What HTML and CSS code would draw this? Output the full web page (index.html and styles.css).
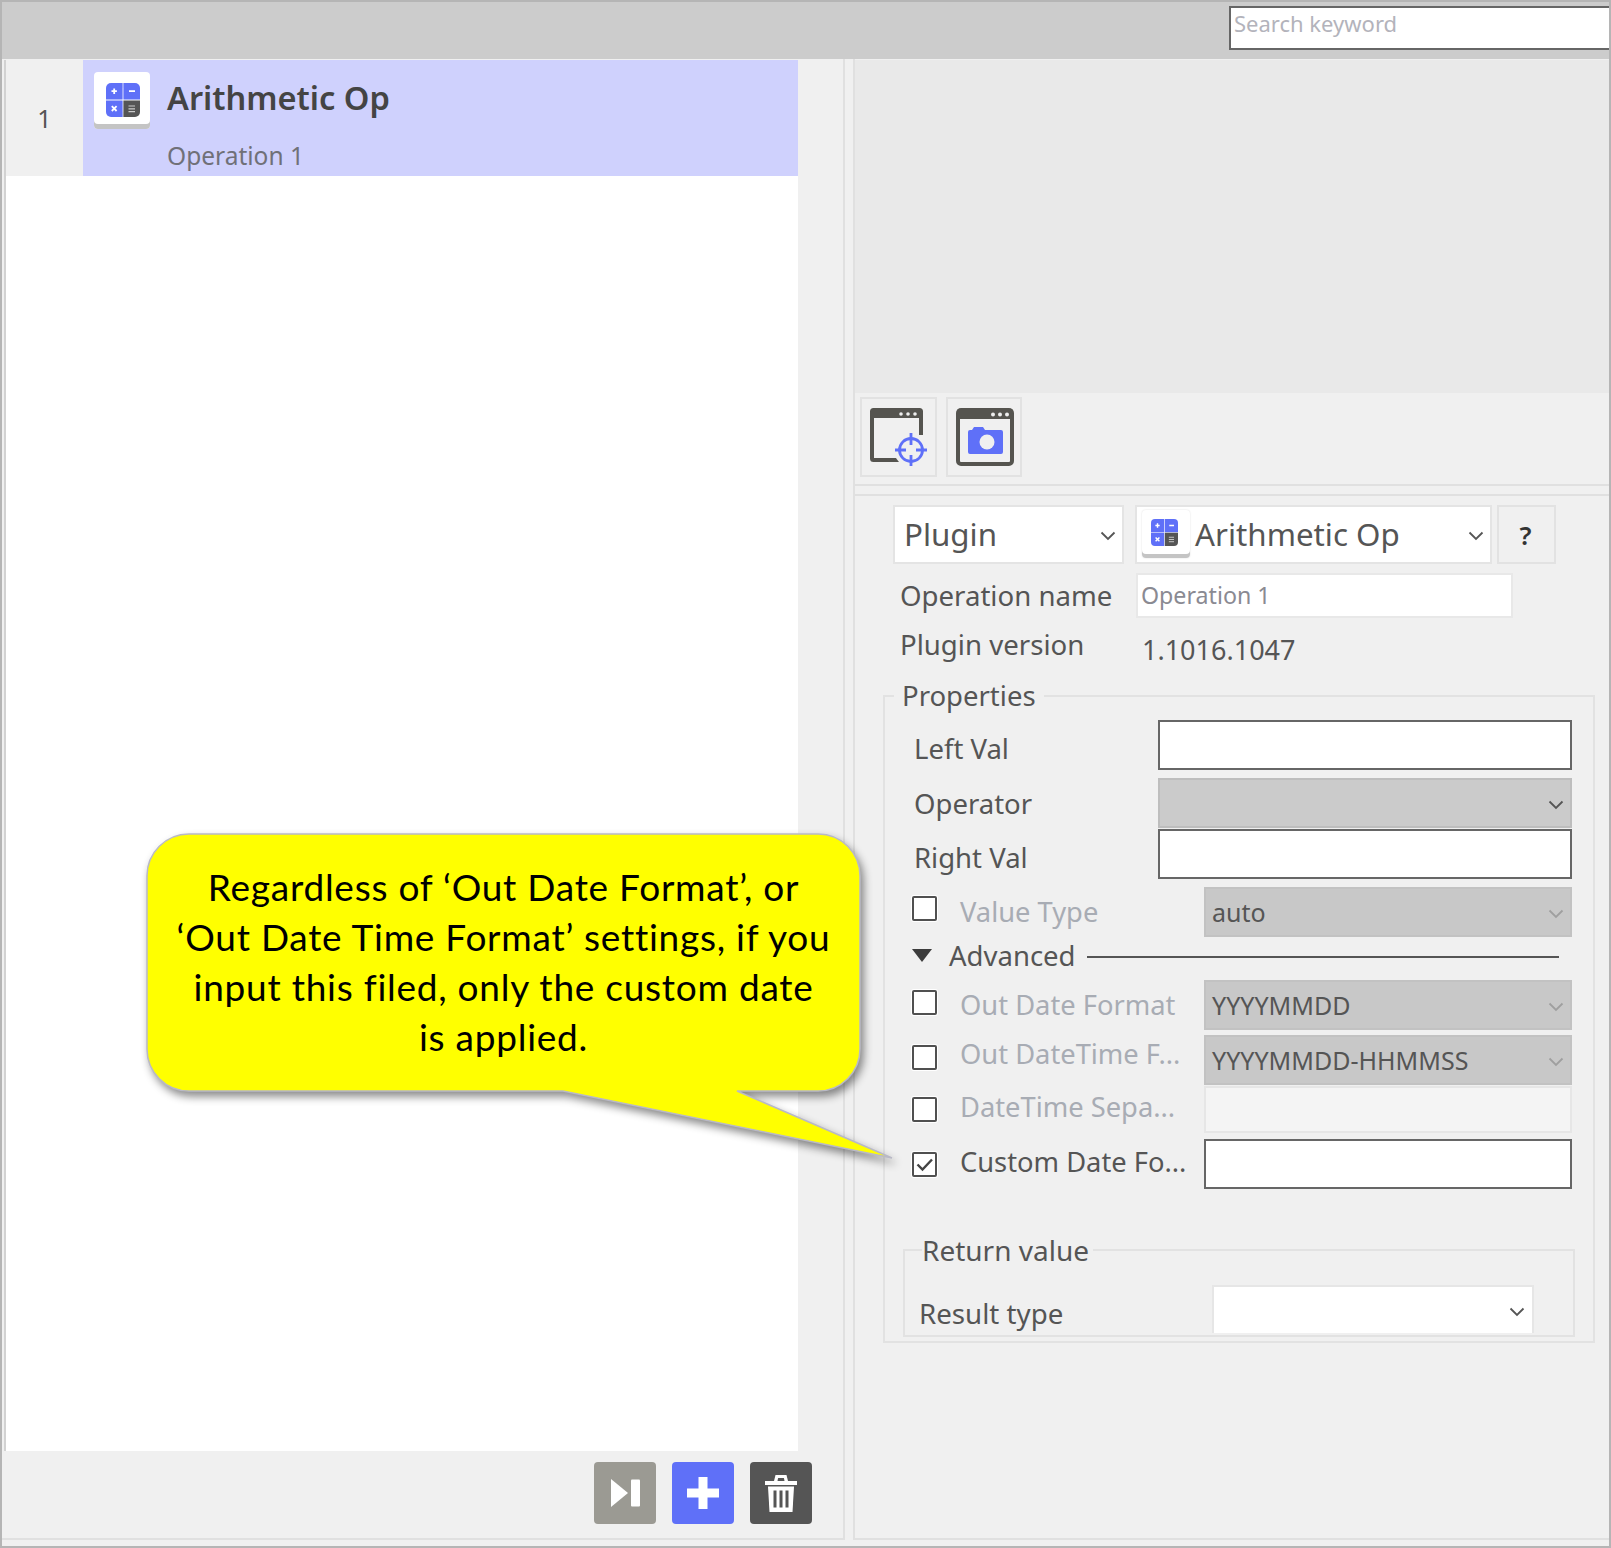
FILE: index.html
```html
<!DOCTYPE html>
<html lang="en">
<head>
<meta charset="utf-8">
<title>Arithmetic Op</title>
<link rel="stylesheet" href="styles.css">
</head>
<body>
<svg class="defs" width="0" height="0" aria-hidden="true">
  <symbol id="calc" viewBox="0 0 34 34">
    <path d="M5 0h11.600v16.600H0V5a5 5 0 0 1 5-5z" fill="#5f70f8"/>
    <path d="M17.400 0H29a5 5 0 0 1 5 5v11.600H17.400z" fill="#5f70f8"/>
    <path d="M0 17.400h16.600V34H5a5 5 0 0 1-5-5z" fill="#5f70f8"/>
    <path d="M17.400 17.400H34V29a5 5 0 0 1-5 5H17.400z" fill="#555"/>
    <path d="M5.500 8.200h5.400M8.200 5.500v5.400M23 8.200h6M5.800 23.200l4.800 4.800M10.600 23.200l-4.800 4.800" stroke="#fff" stroke-width="1.800" fill="none"/>
    <path d="M22.500 23h6.500M22.500 25.800h6.500M22.500 28.600h6.500" stroke="#ccc" stroke-width="1.200" fill="none"/>
  </symbol>
  <symbol id="chev" viewBox="0 0 16 10">
    <path d="M1.500 1.500 8 8l6.500-6.500" stroke="#555" stroke-width="1.800" fill="none"/>
  </symbol>
</svg>
<div class="app">
  <header class="topbar">
    <div class="search">Search keyword</div>
  </header>
  <main class="main">
    <section class="left">
      <div class="list">
        <div class="op-row">
          <div class="op-index">1</div>
          <div class="op-body">
            <div class="tile"><svg class="tile-icon"><use href="#calc"/></svg></div>
            <div class="op-text">
              <div class="op-title">Arithmetic Op</div>
              <div class="op-sub">Operation 1</div>
            </div>
          </div>
        </div>
      </div>
      <div class="actions">
        <div class="act act-grey">
          <svg viewBox="0 0 32 32" width="32" height="32"><path d="M2 2 19 16 2 30z" fill="#fff"/><rect x="22" y="2.500" width="9" height="27" rx="1" fill="#fff"/></svg>
        </div>
        <div class="act act-blue">
          <svg viewBox="0 0 32 32" width="32" height="32"><path d="M11.500 0h9v11.500H32v9H20.500V32h-9V20.500H0v-9h11.500z" fill="#fff"/></svg>
        </div>
        <div class="act act-dark">
          <svg viewBox="0 0 32 38" width="32" height="38"><path d="M9 7 10.500 1h11L23 7h9v4H0V7z" fill="#fff"/><path d="M12.500 7l.6-3h5.800l.6 3z" fill="#555"/><path d="M3 12.500h26l-1.500 25.500h-23z" fill="#fff"/><path d="M10 16.500v17M16 16.500v17M22 16.500v17" stroke="#555" stroke-width="3"/></svg>
        </div>
      </div>
    </section>
    <section class="right">
      <div class="preview"></div>
      <div class="tools">
        <div class="tool">
          <svg viewBox="0 0 58 58" width="58" height="58">
            <path d="M32 52H3.500A1.500 1.500 0 0 1 2 50.500V3.500A1.500 1.500 0 0 1 3.500 2h46A1.500 1.500 0 0 1 51 3.500V27" fill="none" stroke="#55544f" stroke-width="4"/>
            <rect x="1" y="1" width="51" height="9" rx="2" fill="#55544f"/>
            <circle cx="31" cy="6" r="1.800" fill="#eee"/><circle cx="38" cy="6" r="1.800" fill="#eee"/><circle cx="45" cy="6" r="1.800" fill="#eee"/>
            <circle cx="41" cy="42" r="17" fill="#f0f0f0"/>
            <circle cx="41" cy="42" r="11.500" fill="none" stroke="#5f70f8" stroke-width="2.800"/>
            <path d="M41 25v12M41 47v11M25 42h11M46 42h11" stroke="#5f70f8" stroke-width="2.800"/>
          </svg>
        </div>
        <div class="tool tool-cam">
          <svg viewBox="0 0 58 58" width="58" height="58">
            <rect x="2" y="2" width="54" height="54" rx="3" fill="#f0f0f0" stroke="#55544f" stroke-width="4"/>
            <rect x="1" y="1" width="56" height="10" rx="2" fill="#55544f"/>
            <circle cx="37" cy="6.500" r="2" fill="#eee"/><circle cx="44" cy="6.500" r="2" fill="#eee"/><circle cx="51" cy="6.500" r="2" fill="#eee"/>
            <path d="M14 22h2l2-3h9l2 3h16a2 2 0 0 1 2 2v20a2 2 0 0 1-2 2H14a2 2 0 0 1-2-2V24a2 2 0 0 1 2-2z" fill="#5f70f8"/>
            <circle cx="31" cy="34" r="7.500" fill="#f0f0f0"/>
          </svg>
        </div>
      </div>
      <div class="panel">
        <div class="selects">
          <div class="sel sel-plugin"><span>Plugin</span><svg class="chev"><use href="#chev"/></svg></div>
          <div class="sel sel-op">
            <div class="tile tile-sm"><svg class="tile-icon-sm"><use href="#calc"/></svg></div>
            <span>Arithmetic Op</span><svg class="chev"><use href="#chev"/></svg>
          </div>
          <div class="help">?</div>
        </div>
        <div class="meta meta-name">
          <div class="meta-label">Operation name</div>
          <div class="name-input">Operation 1</div>
        </div>
        <div class="meta meta-ver">
          <div class="meta-label">Plugin version</div>
          <div class="ver-value">1.1016.1047</div>
        </div>
        <fieldset class="props">
          <legend>Properties</legend>
          <div class="row row-a"><div class="lbl lbl-down">Left Val</div><div class="fld fld-wide fld-dark"></div></div>
          <div class="row row-b"><div class="lbl">Operator</div><div class="fld fld-wide fld-grey"><svg class="chev chev-end"><use href="#chev"/></svg></div></div>
          <div class="row row-c"><div class="lbl lbl-down">Right Val</div><div class="fld fld-wide fld-dark"></div></div>
          <div class="crow crow-a"><div class="cb cb-up"></div><div class="clbl off">Value Type</div><div class="fld fld-off">auto<svg class="chev chev-end chev-off"><use href="#chev"/></svg></div></div>
          <div class="adv"><span class="tri"></span><span class="adv-text">Advanced</span><span class="adv-line"></span></div>
          <div class="crow crow-b"><div class="cb cb-up"></div><div class="clbl off clbl-up1">Out Date Format</div><div class="fld fld-off">YYYYMMDD<svg class="chev chev-end chev-off"><use href="#chev"/></svg></div></div>
          <div class="crow crow-c"><div class="cb cb-up"></div><div class="clbl off clbl-up4">Out DateTime F...</div><div class="fld fld-off">YYYYMMDD-HHMMSS<svg class="chev chev-end chev-off"><use href="#chev"/></svg></div></div>
          <div class="crow crow-d"><div class="cb"></div><div class="clbl off clbl-up">DateTime Sepa...</div><div class="fld fld-blank"></div></div>
          <div class="crow crow-e">
            <div class="cb"><svg viewBox="0 0 21 21" width="21" height="21"><path d="M3.500 10.500 8.500 15.500 18 5.500" fill="none" stroke="#444" stroke-width="2.400"/></svg></div>
            <div class="clbl clbl-up">Custom Date Fo...</div><div class="fld fld-dark"></div>
          </div>
          <fieldset class="ret">
            <legend>Return value</legend>
            <div class="ret-row"><div class="ret-lbl">Result type</div><div class="ret-sel"><svg class="chev"><use href="#chev"/></svg></div></div>
          </fieldset>
        </fieldset>
      </div>
    </section>
  </main>
  <aside class="callout">
    <svg class="bubble" viewBox="0 0 713 257" width="713" height="257">
      <path d="M42 0H671A42 42 0 0 1 713 42V215A42 42 0 0 1 671 257H590L745 324 416 257H42A42 42 0 0 1 0 215V42A42 42 0 0 1 42 0Z" fill="#ffff00" stroke="#b9b9c6" stroke-width="1.500"/>
    </svg>
    <p class="callout-text">Regardless of ‘Out Date Format’, or<br>‘Out Date Time Format’ settings, if you<br>input this filed, only the custom date<br>is applied.</p>
  </aside>
</div>
</body>
</html>
```

FILE: styles.css
```css
* { box-sizing: border-box; }
html, body { margin: 0; padding: 0; }
body { width: 1611px; height: 1548px; overflow: hidden; font-family: "Noto Sans", "Open Sans", sans-serif; color: #555; }
.defs { position: absolute; }
.app { position: relative; width: 1611px; height: 1548px; border: 2px solid #b5b5b5; background: #f0f0f0; display: flex; flex-direction: column; }

.topbar { height: 57px; flex: none; background: #cccccc; display: flex; justify-content: flex-end; padding-top: 4px; }
.search { width: 380px; height: 44px; background: #fff; border: 2px solid #666; border-right: 0; padding-left: 3px; font-size: 22px; line-height: 31px; color: #b3b3bb; }

.main { display: flex; flex: 1; min-height: 0; }

.left { width: 843px; flex: none; display: flex; flex-direction: column; padding-top: 1px; padding-left: 2px; height: 1481px; border-right: 2px solid #e0e0e0; border-bottom: 2px solid #e0e0e0; }
.list { width: 794px; height: 1391px; background: #fff; border-left: 2px solid #d2d2d2; flex: none; }
.op-row { display: flex; height: 116px; }
.op-index { width: 77px; background: #f0f0f0; font-size: 25px; line-height: 116px; text-align: center; color: #555; }
.op-body { flex: 1; background: #cfd1fd; display: flex; padding: 12px 0 0 11px; gap: 17px; }
.tile { width: 56px; height: 57px; background: #fff; border-radius: 4px; box-shadow: inset 0 -5px 0 #c4c4c4; display: flex; align-items: flex-start; justify-content: center; padding: 11px 0 0 2px; flex: none; }
.tile-icon { width: 34px; height: 34px; }
.op-text { display: flex; flex-direction: column; }
.op-title { font-size: 32.600px; line-height: 44px; font-weight: 600; color: #444; margin-top: 4px; }
.op-sub { font-size: 24.500px; line-height: 34px; color: #707078; margin-top: 19px; }

.actions { flex: 1; display: flex; justify-content: flex-end; align-items: flex-start; gap: 16px; padding: 11px 31px 0 0; }
.act { width: 62px; height: 62px; border-radius: 4px; display: flex; align-items: center; justify-content: center; }
.act-grey { background: #9b9a93; }
.act-blue { background: #5f70f8; }
.act-dark { background: #555555; }

.right { width: 756px; margin-left: 8px; height: 1481px; border-left: 2px solid #e0e0e0; border-bottom: 2px solid #e0e0e0; padding-top: 1px; display: flex; flex-direction: column; }
.preview { height: 333px; background: #e9e9e9; flex: none; }
.tools { height: 93px; flex: none; border-bottom: 2px solid #e0e0e0; display: flex; gap: 9px; padding: 4px 0 0 5px; }
.tool { width: 77px; height: 80px; border: 2px solid #e2e2e2; display: flex; align-items: center; justify-content: center; }
.tool-cam { width: 76px; padding-left: 2px; }

.panel { flex: 1; margin-top: 8px; border-top: 2px solid #e0e0e0; padding-top: 9px; }
.selects { display: flex; padding-left: 38px; height: 59px; }
.sel { height: 59px; background: #fff; border: 2px solid #e4e4e4; display: flex; align-items: center; position: relative; font-size: 31.300px; color: #555; padding-bottom: 2px; }
.sel-plugin { width: 231px; padding-left: 9px; }
.sel-op { width: 357px; margin-left: 11px; padding-left: 5px; gap: 5px; color: #555; }
.chev { width: 16px; height: 10px; flex: none; }
.sel .chev { position: absolute; right: 6px; top: 24px; }
.tile-sm { width: 48px; height: 48px; padding: 9px 4px 0 0; box-shadow: inset 0 -4px 0 #c4c4c4, 0 0 2px #ddd; }
.tile-icon-sm { width: 27px; height: 27px; }
.help { width: 59px; height: 59px; margin-left: 5px; border: 2px solid #e2e2e2; text-align: center; font-size: 26px; line-height: 56px; color: #333; font-weight: 600; padding-right: 2px; }

.meta { display: flex; padding-left: 45px; }
.meta-label { width: 236px; font-size: 27.600px; line-height: 36px; color: #555; flex: none; padding-bottom: 2px; }
.meta-name { margin-top: 9px; height: 45px; align-items: center; }
.name-input { width: 377px; height: 45px; background: #fff; border: 2px solid #e8e8e8; font-size: 23.200px; line-height: 40px; padding-left: 3px; color: #8a8a92; }
.meta-ver { height: 50px; padding-top: 8px; }
.ver-value { font-size: 27px; line-height: 36px; margin-top: 6px; margin-left: 6px; color: #555; }

fieldset { margin: 0; min-width: 0; border: 2px solid #e2e2e2; }
legend { font-size: 27.500px; line-height: 30px; color: #555; }
.props { width: 712px; height: 662px; margin: 13px 0 0 28px; padding: 9px 0 0 0; }
.props > legend { margin-left: 9px; padding: 0 8px; }

.row { display: flex; align-items: center; height: 50px; padding-left: 29px; }
.row-b { margin-top: 8px; }
.row-c { margin-top: 1px; }
.lbl { width: 244px; font-size: 27.500px; color: #555; }
.lbl-down { padding-top: 6px; }
.fld { position: relative; height: 50px; width: 368px; font-size: 25px; line-height: 46px; padding-left: 6px; color: #555; }
.fld-wide { width: 414px; }
.fld-dark { background: #fff; border: 2px solid #666; }
.fld-grey { background: #cbcbcb; border: 2px solid #bdbdbd; }
.fld-off { background: #c8c8c8; border: 2px solid #c2c2c2; }
.fld-blank { height: 47px; background: #f4f4f4; border: 2px solid #e6e6e6; }
.chev-end { position: absolute; right: 6px; top: 20px; }
.chev-off { opacity: .35; }

.crow { display: flex; align-items: center; height: 50px; padding-left: 27px; }
.crow-a { height: 49px; margin-top: 8px; }
.crow-b { margin-top: 10px; }
.crow-c { margin-top: 5px; }
.crow-d { height: 47px; margin-top: 1px; }
.crow-e { margin-top: 6px; }
.cb { width: 25px; height: 25px; border: 2px solid #505050; background: #fff; border-radius: 2px; flex: none; box-shadow: 0 0 0 1px #fff; }
.cb-up { margin-bottom: 6px; }
.clbl { width: 244px; margin-left: 23px; font-size: 27.300px; color: #555; white-space: nowrap; flex: none; }
.clbl-up { margin-bottom: 6px; }
.clbl-up1 { margin-bottom: 2px; }
.clbl-up4 { margin-bottom: 14px; }
.off { color: #a8acb4; }

.adv { height: 30px; margin-top: 4px; padding-left: 27px; display: flex; align-items: center; }
.tri { width: 0; height: 0; border-left: 10px solid transparent; border-right: 10px solid transparent; border-top: 13px solid #3c3c3c; }
.adv-text { font-size: 27.500px; color: #555; margin-left: 17px; }
.adv-line { width: 472px; height: 2px; background: #555; margin: 4px 0 0 11px; }

.ret { width: 672px; height: 102px; margin: 46px 0 0 18px; padding: 0 0 0 14px; }
.ret > legend { padding: 0 4px 0 0; margin-left: 3px; font-size: 28px; }
.ret-row { display: flex; height: 48px; align-items: flex-end; margin-top: 20px; }
.ret-lbl { width: 293px; font-size: 27.700px; line-height: 36px; color: #555; flex: none; padding-bottom: 2px; }
.ret-sel { position: relative; width: 322px; height: 48px; background: #fff; border: 2px solid #e6e6e6; border-bottom: 0; }
.ret-sel .chev { position: absolute; right: 7px; top: 20px; }

.callout { position: absolute; left: 145px; top: 832px; width: 713px; height: 257px; }
.bubble { position: absolute; inset: 0; overflow: visible; filter: drop-shadow(3px 5px 4px rgba(0,0,0,.45)); }
.callout-text { position: relative; margin: 0; padding-top: 28px; text-align: center; font-family: Lato, "Open Sans", sans-serif; font-size: 37px; letter-spacing: .75px; line-height: 50px; color: #000; }
```
